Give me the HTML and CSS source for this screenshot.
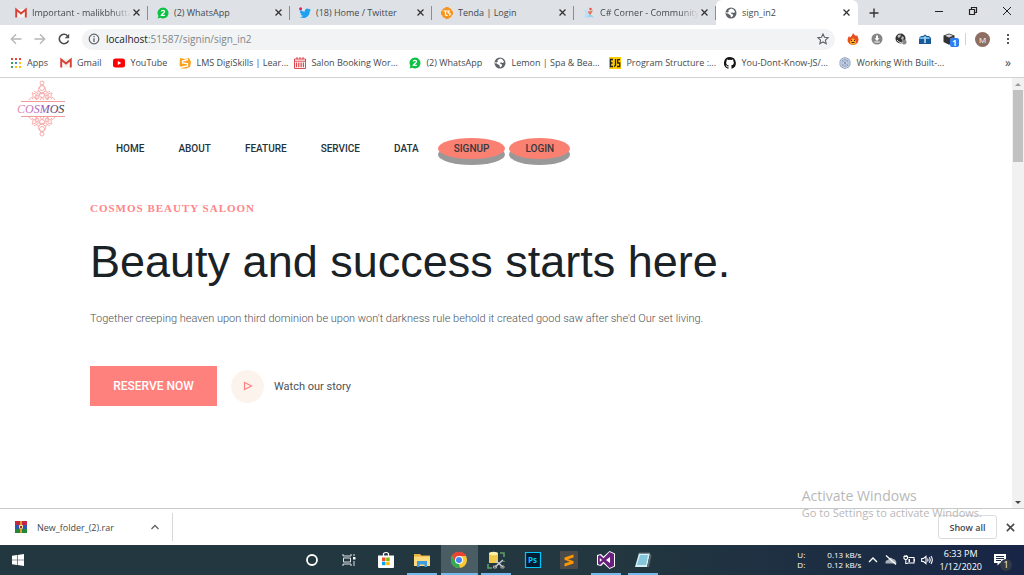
FILE: index.html
```
<!DOCTYPE html>
<html lang="en">
<head>
    <meta charset="UTF-8">
    <meta name="viewport" content="width=device-width, initial-scale=1.0">
    <title>sign_in2</title>
    <link rel="stylesheet" href="styles.css">
</head>
<body>
    <svg class="defs" aria-hidden="true">
        <symbol id="gmail" viewBox="0 0 12 12"><path fill="#f2f2f2" d="M1 2h10v8.500H1z"/><path fill="none" stroke="#d93f33" stroke-width="1.900" d="M1.200 10.500V2.500L6 6.500l4.800-4v8"/></symbol>
        <symbol id="whatsapp" viewBox="0 0 12 12"><path fill="#0cc143" d="M6 .5a5.500 5.500 0 1 1-2.700 10.300L.6 11.500l.8-2.600A5.500 5.500 0 0 1 6 .5z"/><path fill="none" stroke="#fff" stroke-width="1.300" d="M4.300 4.500C4.500 2.800 7.700 2.900 7.500 4.700 7.400 6 4.500 7 4.300 8.400h3.500"/></symbol>
        <symbol id="globe" viewBox="0 0 12 12"><circle cx="6" cy="6" r="5.500" fill="#5f6368"/><path fill="#fff" d="M6.500 1.600l2 .8 1.700 2.500-1.700 1-1.700-.6-.8 1.200 1.900.9.3 1.400-1.500 1.500-.9-.4-.2-1.400-2.800-1.900-2-.3.200-1 1.900.2 1-1.200-.6-1 1.700-1z"/></symbol>
        <symbol id="close" viewBox="0 0 10 10"><path fill="none" stroke="currentColor" stroke-width="1.400" d="M1.700 1.700l6.600 6.600M8.300 1.700L1.700 8.300"/></symbol>
    </svg>

    <div class="tab-strip">
        <div class="tab">
            <svg class="icon"><use href="#gmail"/></svg>
            <span class="tab-title fade">Important - malikbhutta</span>
            <button class="tab-close" aria-label="Close tab"><svg><use href="#close"/></svg></button>
        </div>
        <div class="tab">
            <svg class="icon"><use href="#whatsapp"/></svg>
            <span class="tab-title">(2) WhatsApp</span>
            <button class="tab-close" aria-label="Close tab"><svg><use href="#close"/></svg></button>
        </div>
        <div class="tab">
            <svg class="icon" viewBox="0 0 12 12"><path fill="#1da1f2" d="M1 2.500c1.500 1.500 3 2 4.800 2C5.600 1.500 8.500.8 10 2.300l1.600-.5-.8 1.500 1-.2-1.100 1.300C10.600 9.600 5.500 12.700.7 10c1.500 0 2.400-.3 3.200-1C2.500 8.700 2 8 1.700 7.100h1C1.500 6.500.8 5.500.8 4.500l1 .2C.7 4 .6 3.200 1 2.500z"/><circle cx="1.600" cy="1.700" r="1.500" fill="#e0245e"/></svg>
            <span class="tab-title">(18) Home / Twitter</span>
            <button class="tab-close" aria-label="Close tab"><svg><use href="#close"/></svg></button>
        </div>
        <div class="tab">
            <svg class="icon" viewBox="0 0 12 12"><path fill="#f7941d" d="M4.500 0h3l.5 1.300L10 1.500l.8 2.200L12 4.500v3l-1.200.8L10 10.500l-2 .2L7.500 12h-3L4 10.700l-2-.2-.8-2.200L0 7.500v-3l1.200-.8L2 1.500l2-.2z"/><path fill="none" stroke="#fff" stroke-width="1.200" d="M2.500 4h4M4.500 4v3.500c0 .8 1 1.300 2 .8M9 4H7.200v2h1c1.300 0 1.300 2.200-.2 2.200"/></svg>
            <span class="tab-title">Tenda | Login</span>
            <button class="tab-close" aria-label="Close tab"><svg><use href="#close"/></svg></button>
        </div>
        <div class="tab">
            <svg class="icon" viewBox="0 0 12 12"><path fill="#b9e1f7" d="M1 2l4 2 1.500 4L3 11 .8 10l2-3z"/><path fill="#8fd0f0" d="M7 7l4 3.500-4-.8L4 11z"/><path fill="#f26b4e" d="M5 4l2 .5L10 3 8.500 6 7 8 5.500 6z"/><circle cx="7.500" cy="2" r="1.200" fill="#e8503a"/></svg>
            <span class="tab-title fade">C# Corner - Community</span>
            <button class="tab-close" aria-label="Close tab"><svg><use href="#close"/></svg></button>
        </div>
        <div class="tab active">
            <svg class="icon"><use href="#globe"/></svg>
            <span class="tab-title">sign_in2</span>
            <button class="tab-close" aria-label="Close tab"><svg><use href="#close"/></svg></button>
        </div>
        <button class="new-tab" aria-label="New tab"><svg viewBox="0 0 10 10"><path stroke="#333" stroke-width="1.400" d="M5 .5v9M.5 5h9"/></svg></button>
        <div class="window-buttons">
            <button aria-label="Minimize"><svg viewBox="0 0 10 10"><path stroke="#222" d="M1 5.500h8"/></svg></button>
            <button aria-label="Restore"><svg viewBox="0 0 10 10"><path fill="none" stroke="#222" stroke-width="1.200" d="M1.500 3.500h5v5h-5zM3.500 3.500v-2h5v5h-2"/></svg></button>
            <button aria-label="Close"><svg viewBox="0 0 10 10"><path stroke="#222" d="M1 1l8 8M9 1L1 9"/></svg></button>
        </div>
    </div>

    <div class="toolbar">
        <button class="tool" aria-label="Back"><svg viewBox="0 0 12 12"><path fill="none" stroke="#b4b6b9" stroke-width="1.300" d="M11.500 6H1.500M6 1.300L1.300 6 6 10.700"/></svg></button>
        <button class="tool" aria-label="Forward"><svg viewBox="0 0 12 12"><path fill="none" stroke="#b4b6b9" stroke-width="1.300" d="M.5 6h10M6 1.300L10.700 6 6 10.700"/></svg></button>
        <button class="tool" aria-label="Reload"><svg viewBox="0 0 12 12"><path fill="none" stroke="#4b4e52" stroke-width="1.600" d="M10.500 7.500A4.700 4.700 0 1 1 9.500 2.800"/><path fill="#4b4e52" d="M11.200.8v4.500H6.700z"/></svg></button>
        <div class="address">
            <svg class="icon" viewBox="0 0 12 12"><circle cx="6" cy="6" r="4.800" fill="none" stroke="#5f6368" stroke-width="1.200"/><path stroke="#5f6368" stroke-width="1.300" d="M6 5.300V9M6 3v1.300"/></svg>
            <span class="url" role="textbox" aria-label="Address"><b>localhost</b>:51587/signin/sign_in2</span>
            <button class="star" aria-label="Bookmark this page"><svg viewBox="0 0 12 12"><path fill="none" stroke="#5f6368" stroke-width="1.100" d="M6 1l1.500 3.300 3.600.4-2.700 2.400.8 3.600L6 8.900l-3.200 1.800.8-3.600L.9 4.700l3.600-.4z"/></svg></button>
        </div>
        <div class="extensions">
            <svg viewBox="0 0 12 12"><path fill="#e8501f" d="M6 0c.5 1.500 3 3 3.500 3l.5-1c1.500 3 2 5 1 7-2 4-8 4-10 0C0 7 1 5 2 3l1 1.500C4.500 3 5.500 2 6 0z"/><path fill="#fdb52b" d="M6 5c1 1.500 3 2 3 4s-1.500 2.500-3 2.500S3 11 3 9s2-2.500 3-4z"/><path stroke="#542010" fill="none" d="M4 7.500h1M7 7.500h1M4.500 9.500h3"/></svg>
            <svg viewBox="0 0 12 12"><circle cx="6" cy="6" r="5.500" fill="#858585"/><path fill="#fff" d="M5 2.500h2v2.800h1.600L6 8 3.400 5.300H5zM3.300 8.500h5.400v1H3.300z"/></svg>
            <svg viewBox="0 0 12 12"><circle cx="5.500" cy="5.500" r="5" fill="#333"/><path fill="#bbb" d="M3 2l3-.5-.5 2L4 5 2.500 4zM7 3l2 1.500L8 7 6 6z"/><circle cx="9" cy="9" r="2.500" fill="#888"/><path stroke="#ddd" fill="none" d="M2 7c2 2.500 4 3 6 3"/></svg>
            <svg viewBox="0 0 12 12"><path fill="#195a9b" d="M0 5l2-2h2l2-1.500L8 3h2l2 2v6H0z"/><path fill="#67b7e7" d="M0 5l2-1h3v2H0zM7 4h3l1 2H7z"/><path fill="#d9eefb" d="M5 3.500h2l-.3 2V10H5.300V5.500z"/></svg>
            <span class="cube">
                <svg viewBox="0 0 12 12"><path fill="#333" d="M6 .5l5.500 2v6.500L6 11.800.5 9V2.500z"/><path fill="#d6d6d6" d="M6 1.300l3.900 1.500L6 4.400 2.100 2.800z"/><path fill="#777" d="M7 5.500l3.500-1.500v4.500L7 10.200z"/></svg>
                <span class="badge">1</span>
            </span>
        </div>
        <button class="avatar" aria-label="Profile">M</button>
        <button class="menu" aria-label="Menu"><svg viewBox="0 0 12 12"><path fill="#55585c" d="M5 1h2v2H5zM5 5h2v2H5zM5 9h2v2H5z"/></svg></button>
    </div>

    <nav class="bookmarks" aria-label="Bookmarks">
        <a href="#"><svg class="icon" viewBox="0 0 12 12"><path fill="#ea4335" d="M1 1h2v2H1zM5 1h2v2H5zM9 1h2v2H9z"/><path fill="#34a853" d="M1 5h2v2H1zM1 9h2v2H1z"/><path fill="#4285f4" d="M5 5h2v2H5z"/><path fill="#fbbc05" d="M9 5h2v2H9zM5 9h2v2H5zM9 9h2v2H9z"/></svg>Apps</a>
        <a href="#"><svg class="icon"><use href="#gmail"/></svg>Gmail</a>
        <a href="#"><svg class="icon" viewBox="0 0 12 12"><rect y="1.500" width="12" height="9" rx="2.500" fill="#f00"/><path fill="#fff" d="M4.800 4v4l3.500-2z"/></svg>YouTube</a>
        <a href="#" class="wide"><svg class="icon" viewBox="0 0 12 12"><path fill="#f9a11b" d="M1 1l5 1 4-1 2 4-1 5-4 1.500H2L.5 8z"/><path fill="none" stroke="#fff" stroke-width="1.300" d="M9 2.500L3.500 4v2l5 .5V9L1 10.500"/></svg>LMS DigiSkills | Lear...</a>
        <a href="#" class="wide"><svg class="icon" viewBox="0 0 12 12"><path fill="#fff" stroke="#dc4b50" d="M.5 2h11v9.500H.5zM.5 4.200h11"/><path stroke="#dc4b50" stroke-width="1.300" d="M3 .3v2M6 .3v2M9 .3v2M2.500 5.500v4.800M4.800 5.500v4.800M7.100 5.500v4.800M9.400 5.500v4.800"/></svg>Salon Booking Wor...</a>
        <a href="#" class="medium"><svg class="icon"><use href="#whatsapp"/></svg>(2) WhatsApp</a>
        <a href="#" class="wide"><svg class="icon"><use href="#globe"/></svg>Lemon | Spa &amp; Bea...</a>
        <a href="#" class="wide"><svg class="icon" viewBox="0 0 12 12"><path fill="#fc0" d="M0 0h12v12H0z"/><path fill="none" stroke="#222" stroke-width="1.300" d="M4 2.500H1.500v7H4M1.500 6h2M6.500 2v6.500L5 9.500M11 2.700H8.700V6h2v3.500H8"/></svg>Program Structure :...</a>
        <a href="#" class="wide"><svg class="icon" viewBox="0 0 16 16"><path fill="#111" d="M8 0a8 8 0 0 0-2.500 15.600c.4.100.5-.2.500-.4v-1.500c-2.200.5-2.700-1-2.700-1-.4-.9-.9-1.200-.9-1.200-.7-.5.100-.5.100-.5.800.1 1.200.8 1.200.8.700 1.200 1.900.9 2.300.7.100-.5.300-.9.500-1.100-1.800-.2-3.600-.9-3.600-4 0-.9.300-1.600.8-2.100-.1-.2-.4-1 .1-2.100 0 0 .7-.2 2.200.8a7.500 7.500 0 0 1 4 0c1.500-1 2.200-.8 2.200-.8.400 1.100.2 1.900.1 2.100.5.600.8 1.300.8 2.100 0 3.100-1.900 3.700-3.700 3.900.3.300.6.800.6 1.500v2.300c0 .2.100.5.500.4A8 8 0 0 0 8 0z"/></svg>You-Dont-Know-JS/...</a>
        <a href="#" class="wide"><svg class="icon" viewBox="0 0 12 12"><path fill="#dfe5f2" stroke="#8c9fc0" d="M6 .6l2 .7 2 1 1 2v3.500l-1 2-2 1-2 .7-2-.7-2-1-1-2V4.300l1-2 2-1z"/><path fill="none" stroke="#7186ad" stroke-width=".7" d="M3 3.500l3-1 3 1v5l-3 1-3-1zM3 3.500l6 5M9 3.500l-6 5M6 2.500v7"/></svg>Working With Built-...</a>
        <button class="more" aria-label="More bookmarks">»</button>
    </nav>

    <div class="viewport">
        <main class="page">
            <header class="site-header">
                <a href="#" class="logo" aria-label="Cosmos">
                    <svg viewBox="0 0 54 58">
                        <defs>
                            <linearGradient id="name"><stop offset="0" stop-color="#f08fae"/><stop offset=".5" stop-color="#a25fc9"/><stop offset="1" stop-color="#333"/></linearGradient>
                            <g id="lace" fill="none" stroke="#f9abab" stroke-width="1">
                                <circle cx="26" cy="3" r="2"/><circle cx="26" cy="8" r="2.500"/>
                                <path d="M26 5c-4 2-5 5-2 7s-2 3-3 1 2-3 5 1M26 5c4 2 5 5 2 7s2 3 3 1-2-3-5 1"/>
                                <circle cx="26" cy="15" r="2.500"/><circle cx="21" cy="17" r="2"/><circle cx="31" cy="17" r="2"/>
                                <path d="M13 20c2-4 6-1 3-7 5 0 6 4 4 7M39 20c-2-4-6-1-3-7-5 0-6 4-4 7M18 11l3 2M34 11l-3 2M24 20l2-3 2 3M16 19q3-4 5 1M36 19q-3-4-5 1"/>
                            </g>
                        </defs>
                        <use href="#lace"/>
                        <use href="#lace" transform="matrix(1 0 0 -1 0 57)"/>
                        <path stroke="#f49a9a" d="M5 21.500h44M5 36.500h44"/>
                        <text class="logo-text" x="1" y="33" fill="url(#name)">COSMOS</text>
                    </svg>
                </a>
                <nav class="site-nav" aria-label="Main">
                    <a href="#">HOME</a>
                    <a href="#">ABOUT</a>
                    <a href="#">FEATURE</a>
                    <a href="#">SERVICE</a>
                    <a href="#">DATA</a>
                    <button class="pill">SIGNUP</button>
                    <button class="pill">LOGIN</button>
                </nav>
            </header>
            <section class="hero">
                <h5>COSMOS BEAUTY SALOON</h5>
                <h1>Beauty and success starts here.</h1>
                <p>Together creeping heaven upon third dominion be upon won't darkness rule behold it created good saw after she'd Our set living.</p>
                <div class="actions">
                    <button class="reserve">RESERVE NOW</button>
                    <a href="#" class="story">
                        <span class="play"><svg viewBox="0 0 10 10"><path fill="none" stroke="#ff8080" stroke-width="1.200" d="M1.500 1.500v7L8.500 5z"/></svg></span>
                        Watch our story
                    </a>
                </div>
            </section>
        </main>
        <div class="scrollbar" aria-hidden="true">
            <svg viewBox="0 0 12 12"><path fill="#999" d="M3 8h6L6 5z"/></svg>
            <div class="thumb"></div>
            <svg class="down" viewBox="0 0 12 12"><path fill="#444" d="M3 5h6L6 8z"/></svg>
        </div>
    </div>

    <div class="downloads">
        <button class="file">
            <svg class="icon" viewBox="0 0 12 12"><path fill="#c22646" d="M0 0h12v4H0z"/><path fill="#3156ae" d="M0 4h12v4H0z"/><path fill="#23863c" d="M0 8h12v4H0z"/><path fill="#e39a22" d="M5 0h2v12H5z"/><path fill="#f3d9a0" d="M4 4h4v3.500H4z"/><path fill="#9b3021" d="M5 5h2v2H5z"/></svg>
            <span>New_folder_(2).rar</span>
            <svg class="chevron" viewBox="0 0 10 10"><path fill="none" stroke="#5f6368" stroke-width="1.300" d="M1.500 7L5 3.500 8.500 7"/></svg>
        </button>
        <div class="downloads-right">
            <button class="show-all">Show all</button>
            <button class="close-bar" aria-label="Close"><svg><use href="#close"/></svg></button>
        </div>
    </div>

    <div class="watermark">
        <div class="watermark-title">Activate Windows</div>
        <div>Go to Settings to activate Windows.</div>
    </div>

    <footer class="taskbar">
        <button class="start" aria-label="Start"><svg viewBox="0 0 12 12"><path fill="#fff" d="M0 1.700l5-.7v4.700H0zM5.600.9L12 0v5.700H5.600zM0 6.300h5V11l-5-.7zM5.600 6.300H12V12l-6.400-.9z"/></svg></button>
        <div class="apps">
            <button aria-label="Cortana"><svg viewBox="0 0 18 18"><circle cx="9" cy="9" r="5" fill="none" stroke="#fff" stroke-width="1.800"/></svg></button>
            <button aria-label="Task view"><svg viewBox="0 0 18 18"><path fill="none" stroke="#dfe5e8" d="M3 3v2h8V3M3 15v-2h8v2M3.500 7h7v4h-7zM14 3v2M14 10v5"/><path fill="#fff" d="M13 6h2.500v2.500H13z"/></svg></button>
            <button aria-label="Store"><svg viewBox="0 0 18 18"><path fill="none" stroke="#fff" stroke-width="1.200" d="M6.500 5V2.500q2.500-2 5 0V5"/><path fill="#fff" d="M1 4.500h16V16q0 1-1 1H2q-1 0-1-1z"/><path fill="#f25022" d="M5 6.500h3.500V10H5z"/><path fill="#7fba00" d="M9.200 6.500h3.500V10H9.200z"/><path fill="#00a4ef" d="M5 10.700h3.500v3.500H5z"/><path fill="#ffb900" d="M9.200 10.700h3.500v3.500H9.200z"/></svg></button>
            <button class="open" aria-label="File Explorer"><svg viewBox="0 0 18 18"><path fill="#e8b23d" d="M1 3h6l1.500 1.500H17V7H1z"/><path fill="#fddb7b" d="M1 5.500h16V15H1z"/><path fill="#3e9be0" d="M4 10h10v6h-2.500v-2.500h-5V16H4z"/></svg></button>
            <button class="open current" aria-label="Chrome"><svg viewBox="0 0 18 18"><circle cx="9" cy="9" r="8" fill="#fcc934"/><path fill="#ea4335" d="M2 5a8 8 0 0 1 14 0H9L5.500 11z"/><path fill="#34a853" d="M2 5l4 6.500L9 13l1 4A8 8 0 0 1 2 5z"/><circle cx="9" cy="9" r="4" fill="#fff"/><circle cx="9" cy="9" r="3" fill="#4285f4"/></svg></button>
            <button class="open" aria-label="SQL Server"><svg viewBox="0 0 18 18"><path fill="#f3c94b" d="M2 2h9v10H2z"/><ellipse cx="6.500" cy="2.500" rx="4.500" ry="1.800" fill="#fff0a8"/><path fill="none" stroke="#5f9c68" stroke-width="1.600" d="M13 2h4v4M5 17H1v-4M17 10v1"/><path stroke="#c8cdd0" stroke-width="1.600" d="M8 16l8-7M9 10l7 6"/><path fill="none" stroke="#aaa" d="M6.500 15h3v2h-3zM14 15h3v2h-3z"/></svg></button>
            <button aria-label="Photoshop"><svg viewBox="0 0 18 18"><path fill="#001d33" stroke="#00c8ff" stroke-width="1.200" d="M1.500 1.500h15v15h-15z"/><text x="4" y="12" class="ps" fill="#00c8ff">Ps</text></svg></button>
            <button aria-label="Sublime Text"><svg viewBox="0 0 18 18"><rect width="18" height="18" rx="1" fill="#4b4b4b"/><path fill="#ff9800" d="M4.500 6.500l9-3v3L8 8.300l5.500 2v2.200l-9 3v-3L10 10.700l-5.500-2z"/></svg></button>
            <button class="open" aria-label="Visual Studio"><svg viewBox="0 0 18 18"><path fill="#fff" d="M0 4l4-1 2.500 2.500L12.500 0 18 2.500v13L12.500 18l-6-5.500L4 15l-4-1z"/><path fill="#68217a" fill-rule="evenodd" d="M1 5l2-1 3.500 3.200L12.500 1 17 3v12l-4.500 2-6-6.200L3 14l-2-1zm1.800 2v4L5 9zM13 6L9 9l4 3z"/></svg></button>
            <button class="open" aria-label="Notepad"><svg viewBox="0 0 18 18"><path fill="#d7f1f7" d="M5 2h11l-3 14H1z"/><path fill="#85c7da" d="M6 4h8l-2 10H3z"/><path fill="#5a6870" d="M5 1.500h11v1.300H5zM16 3l1.500 1L15 16h-2z"/></svg></button>
        </div>
        <div class="tray">
            <div class="speed"><span>U:</span><span>0.13 kB/s</span><span>D:</span><span>0.12 kB/s</span></div>
            <svg viewBox="0 0 12 12"><path fill="none" stroke="#fff" stroke-width="1.300" d="M2 8l4-4 4 4"/></svg>
            <svg viewBox="0 0 12 12"><path fill="#a9b2ba" d="M.5 9.500Q0 6 3 6q2-4 5-1 3 0 3.500 4.500z"/><path stroke="#fff" stroke-width="1.200" d="M1 1.500l10 9"/></svg>
            <svg viewBox="0 0 12 12"><path fill="none" stroke="#fff" stroke-width="1.100" d="M5.500 3.500H11v5.500H4.500M11.500 5v2.500M1 2.500h3.500v2L2.800 6 1 4.500zM2.800 6v3.500h1.700M2 1v1.500M3.700 1v1.500"/><path fill="#fff" d="M5.500 5H7v3H5.500z"/></svg>
            <svg viewBox="0 0 12 12"><path fill="none" stroke="#fff" stroke-width="1.100" d="M.7 4.500h1.800L5 2.500v7l-2.500-2H.7zM6.500 4.500q1 1.500 0 3M8.200 3.200q2 2.800 0 5.600M10 2q2.600 4 0 8"/></svg>
            <div class="clock"><span>6:33 PM</span><span>1/12/2020</span></div>
            <button class="notify" aria-label="Notifications">
                <svg viewBox="0 0 12 12"><path fill="#fff" d="M0 0h12v9H6L3.500 11.500V9H0z"/><path stroke="#1b2a45" d="M2 2.500h8M2 4.500h8M2 6.500h5"/></svg>
                <span>1</span>
            </button>
        </div>
    </footer>
</body>
</html>
```

FILE: styles.css
```
/* Global Styles */
* {
    box-sizing: border-box;
}

body, html {
    height: 100%;
    margin: 0;
    padding: 0;
}

body {
    display: flex;
    flex-direction: column;
    position: relative;
    overflow: hidden;
    background-color: #fff;
    font-family: 'Open Sans', 'Noto Sans', sans-serif;
    font-size: 9px;
    color: #45494d;
}

button {
    border: none;
    background: none;
    padding: 0;
    font: inherit;
    color: inherit;
    cursor: pointer;
}

a {
    color: inherit;
    text-decoration: none;
}

svg {
    display: block;
    flex: none;
    width: 12px;
    height: 12px;
}

.defs {
    position: absolute;
    width: 0;
    height: 0;
}

/* Tab strip */
.tab-strip {
    display: flex;
    height: 25px;
    padding-left: 6px;
    background-color: #dee1e6;
}

.tab {
    display: flex;
    align-items: center;
    flex: 0 1 142px;
    min-width: 0;
    height: 25px;
    padding: 0 7px 0 9px;
    gap: 5px;
    background: linear-gradient(#8a8d91, #8a8d91) right center / 1px 14px no-repeat;
}

.tab.active {
    background: #fff;
    border-radius: 6px 6px 0 0;
}

.tab-title {
    flex: 1;
    min-width: 0;
    overflow: hidden;
    white-space: nowrap;
}

.tab-title.fade {
    margin-right: -4px;
    -webkit-mask-image: linear-gradient(90deg, #000 80%, transparent);
    mask-image: linear-gradient(90deg, #000 80%, transparent);
}

.tab-close svg {
    width: 9px;
    height: 9px;
    color: #333;
}

.new-tab {
    width: 32px;
}

.new-tab svg, .window-buttons svg {
    width: 10px;
    height: 10px;
    margin: 0 auto;
}

.window-buttons {
    display: flex;
    margin-left: auto;
}

.window-buttons button {
    width: 34px;
    height: 21px;
}

/* Toolbar */
.toolbar {
    display: flex;
    align-items: center;
    height: 28px;
    padding: 0 10px;
}

.tool {
    width: 24px;
    padding-right: 12px;
}

.address {
    display: flex;
    align-items: center;
    flex: 1;
    height: 21px;
    padding: 0 6px;
    gap: 6px;
    border-radius: 11px;
    background-color: #f1f3f4;
    font-size: 10px;
    color: #80868b;
}

.url {
    flex: 1;
}

.url b {
    font-weight: 400;
    color: #202124;
}

.extensions {
    display: flex;
    gap: 12px;
    margin-left: 12px;
    padding-right: 10px;
    border-right: 1px solid #d0d3d6;
}

.cube {
    position: relative;
}

.badge {
    position: absolute;
    left: 7px;
    top: 5px;
    width: 9px;
    height: 9px;
    border-radius: 2px;
    background-color: #2e7cf6;
    color: #fff;
    font-size: 8px;
    font-weight: 700;
    line-height: 9px;
    text-align: center;
}

.avatar {
    width: 15px;
    height: 15px;
    margin: 0 12px 0 9px;
    border-radius: 50%;
    background-color: #8d6e63;
    color: #fff;
    font-size: 8px;
}

/* Bookmarks */
.bookmarks {
    display: flex;
    align-items: center;
    height: 25px;
    padding: 0 13px 5px 10px;
    gap: 12px;
    border-bottom: 1px solid #d0d2d4;
}

.bookmarks a {
    display: flex;
    align-items: center;
    gap: 5px;
    white-space: nowrap;
}

.bookmarks .wide {
    flex: 0 1 103px;
    min-width: 0;
}

.bookmarks .medium {
    flex: 0 1 73px;
    min-width: 0;
}

.more {
    margin-left: auto;
    font-size: 12px;
}

/* Page */
.viewport {
    display: flex;
    flex: 1;
    min-height: 0;
}

.page {
    flex: 1;
    font-family: Roboto, sans-serif;
    color: #4d5156;
}

.logo {
    display: block;
    width: 54px;
    margin-left: 16px;
    padding-top: 2px;
}

.logo svg {
    width: 54px;
    height: 58px;
}

.logo-text {
    font-family: 'Liberation Serif', serif;
    font-size: 12px;
    font-style: italic;
}

.site-nav {
    display: flex;
    align-items: center;
    padding-left: 116px;
    gap: 34px;
    font-size: 10px;
    font-weight: 500;
    line-height: 21px;
    color: #25333b;
}

.pill {
    height: 21px;
    padding: 0 16px;
    border-radius: 50%;
    background-color: #fa8072;
    box-shadow: 0 6px #999;
    color: #37383a;
}

.site-nav .pill {
    margin-left: -15px;
}

.site-nav .pill + .pill {
    margin-left: -30px;
}

.hero {
    padding: 41px 90px 0;
}

.hero h5 {
    margin: 0;
    font-family: 'Liberation Serif', serif;
    font-size: 11px;
    font-weight: 700;
    line-height: 16px;
    letter-spacing: 1px;
    color: #ff8589;
}

.hero h1 {
    margin: 20px 0;
    font-family: 'Liberation Sans', sans-serif;
    font-size: 45px;
    font-weight: 400;
    line-height: 52px;
    color: #1a2226;
}

.hero p {
    margin: 0 0 36px;
    font-size: 11px;
    font-weight: 300;
    line-height: 22px;
}

.actions {
    display: flex;
    align-items: center;
    gap: 14px;
}

.reserve {
    width: 127px;
    height: 40px;
    background-color: #ff817e;
    color: #fff;
    font-size: 12px;
    font-weight: 500;
}

.story {
    display: flex;
    align-items: center;
    gap: 10px;
    font-size: 11px;
}

.play {
    display: grid;
    place-items: center;
    width: 33px;
    height: 33px;
    border-radius: 50%;
    background-color: #fcf4ec;
}

.play svg {
    width: 10px;
    height: 10px;
}

/* Scrollbar */
.scrollbar {
    display: flex;
    flex-direction: column;
    width: 12px;
    background-color: #f1f1f1;
}

.thumb {
    height: 72px;
    margin: 0 1px;
    background-color: #c1c1c1;
}

.scrollbar .down {
    margin-top: auto;
}

/* Downloads bar */
.downloads {
    display: flex;
    align-items: center;
    height: 37px;
    border-top: 1px solid #c6c8ca;
}

.file {
    display: flex;
    align-items: center;
    width: 173px;
    height: 28px;
    padding: 0 12px 0 15px;
    gap: 10px;
    border-right: 1px solid #d5d7d9;
}

.chevron {
    width: 10px;
    height: 10px;
    margin-left: auto;
}

.downloads-right {
    display: flex;
    align-items: center;
    margin-left: auto;
    padding-right: 8px;
    gap: 8px;
}

.show-all {
    width: 59px;
    height: 24px;
    border: 1px solid #dadce0;
    border-radius: 3px;
    font-weight: 600;
}

.close-bar svg {
    width: 11px;
    height: 11px;
}

/* Lies over the page and the downloads bar */
.watermark {
    position: absolute;
    right: 42px;
    bottom: 54px;
    font-size: 11px;
    line-height: 16px;
    color: #b8b8b8;
    pointer-events: none;
}

.watermark-title {
    font-size: 14px;
    line-height: 18px;
}

/* Taskbar */
.taskbar {
    display: flex;
    align-items: center;
    height: 30px;
    background: linear-gradient(90deg, #22373f 60%, #182546);
    color: #fff;
}

.start {
    margin-left: 12px;
}

.apps {
    display: flex;
    width: 367px;
    height: 30px;
    margin-left: 270px;
}

.apps button {
    display: grid;
    place-items: center;
    flex: 1;
}

.apps svg {
    width: 18px;
    height: 18px;
}

.apps .open {
    background: linear-gradient(#76b9ed, #76b9ed) center bottom / 30px 2px no-repeat;
}

.apps .current {
    background-color: #4a5c64;
    background-size: 100% 2px;
}

.ps {
    font-size: 8px;
    font-weight: 700;
}

.tray {
    display: flex;
    align-items: center;
    margin-left: auto;
    padding-right: 18px;
    gap: 6px;
}

.speed {
    display: grid;
    grid-template-columns: 30px auto;
    font-size: 8px;
    line-height: 10px;
}

.clock {
    display: flex;
    flex-direction: column;
    align-items: center;
    line-height: 13px;
}

.notify {
    position: relative;
    margin-left: 6px;
}

.notify span {
    position: absolute;
    left: 6px;
    top: 5px;
    width: 12px;
    height: 12px;
    border-radius: 50%;
    background-color: #333a44;
    font-size: 9px;
    line-height: 12px;
}
```
